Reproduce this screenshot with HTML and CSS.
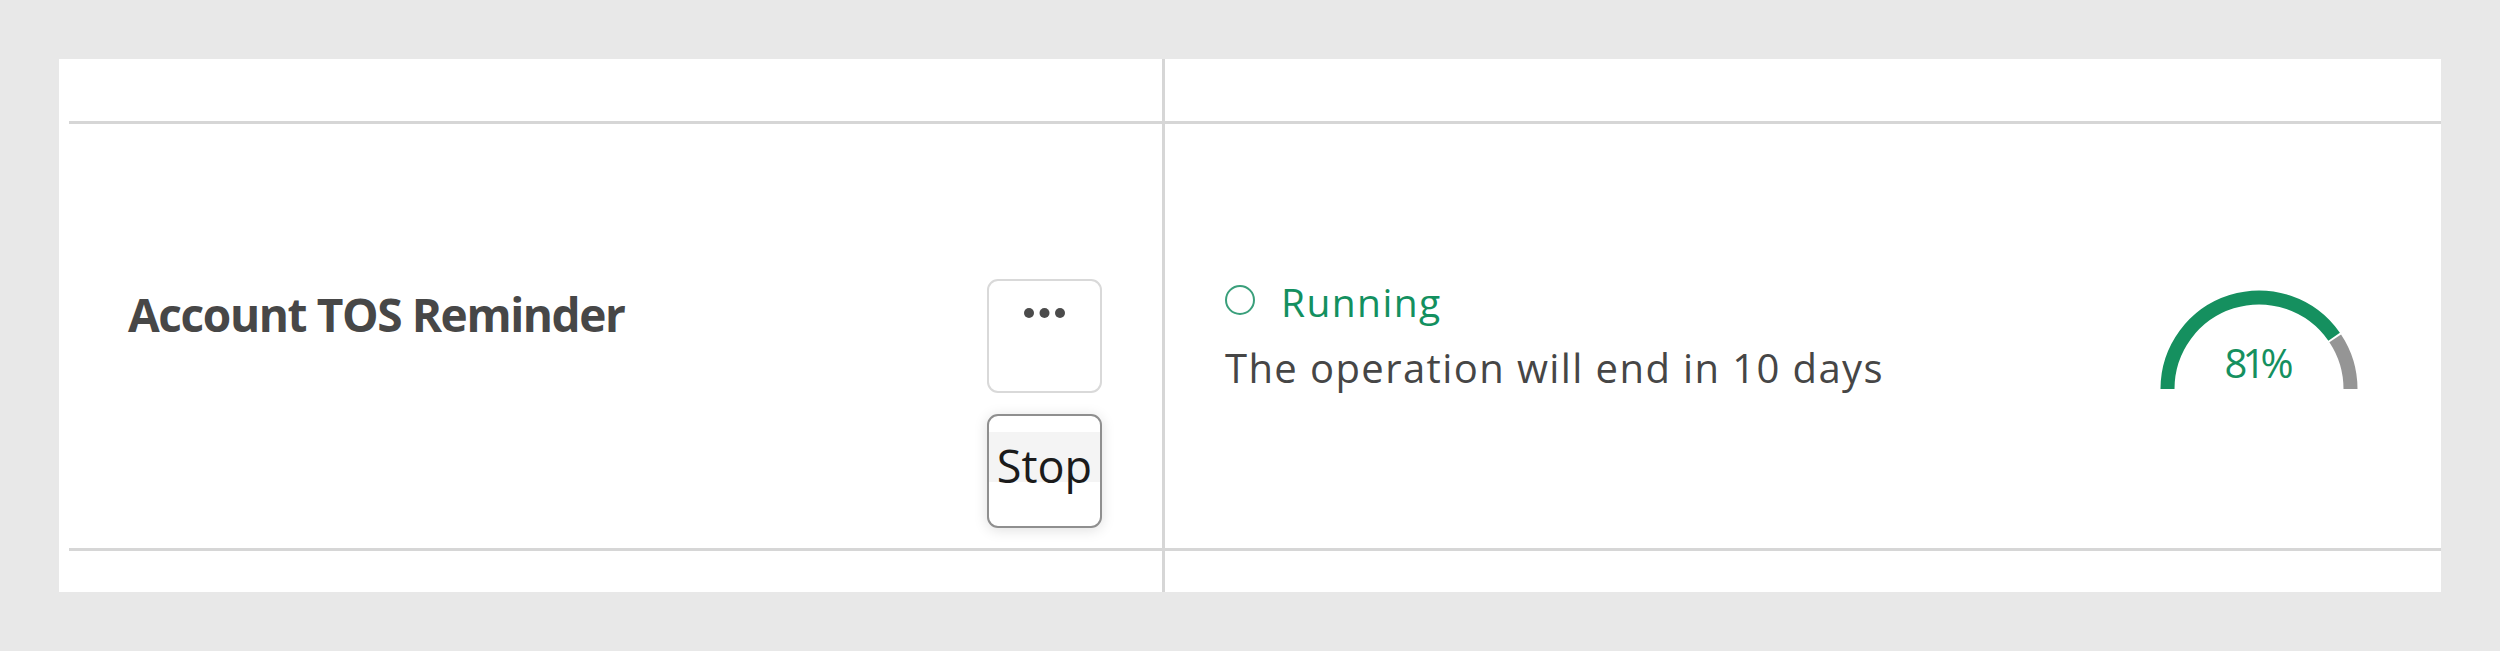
FILE: index.html
```html
<!DOCTYPE html>
<html lang="en">
<head>
<meta charset="utf-8">
<title>Operations</title>
<link rel="stylesheet" href="styles.css">
</head>
<body>
<div class="panel">
  <div class="row head">
    <div class="cell left"></div>
    <div class="cell right"></div>
  </div>
  <div class="row item">
    <div class="cell left item-left">
      <div class="title">Account TOS Reminder</div>
      <div class="actions">
        <button class="btn more" aria-label="More actions">
          <svg class="dots" width="41" height="10" viewBox="0 0 41 10"><circle cx="5" cy="5" r="5"/><circle cx="20.5" cy="5" r="5"/><circle cx="36" cy="5" r="5"/></svg>
        </button>
        <button class="btn stop"><span class="band">Stop</span></button>
      </div>
    </div>
    <div class="cell right item-right">
      <div class="status">
        <div class="state"><span class="ring"></span><span class="state-label">Running</span></div>
        <div class="desc">The operation will end in 10 days</div>
      </div>
      <div class="gauge">
        <svg width="200" height="100" viewBox="0 0 200 100">
          <path class="arc-done" d="M 8.5 100 A 91.5 91.5 0 0 1 175.13 47.78"/>
          <path class="arc-rest" d="M 176.21 49.36 A 91.5 91.5 0 0 1 191.5 100"/>
          <text class="gauge-value" x="100" y="88.8" text-anchor="middle" textLength="69" lengthAdjust="spacing">81%</text>
        </svg>
      </div>
    </div>
  </div>
  <div class="row tail">
    <div class="cell left"></div>
    <div class="cell right"></div>
  </div>
</div>
</body>
</html>
```

FILE: styles.css
```css
html, body {
  margin: 0;
  padding: 0;
}
body {
  background: #e8e8e8;
  font-family: "Open Sans", "Noto Sans", sans-serif;
  color: #4b4b4b;
}
.panel {
  margin: 59px;
  height: 533px;
  background: #ffffff;
  overflow: hidden;
  padding-left: 10px;
  box-sizing: border-box;
}
.row {
  display: grid;
  grid-template-columns: 1096px 1fr;
  border-bottom: 3px solid #d6d6d6;
}
.head {
  height: 62px;
}
.item {
  height: 424px;
}
.tail {
  height: 120px;
}
.cell.left {
  border-right: 3px solid #d6d6d6;
}
.item-left {
  display: flex;
  justify-content: space-between;
  align-items: flex-start;
  padding: 0 60px 0 59px;
}
.title {
  margin-top: 160px;
  font-size: 46px;
  line-height: 60px;
  font-weight: 700;
  letter-spacing: -1.4px;
  color: #474747;
}
.actions {
  margin-top: 155px;
  display: flex;
  flex-direction: column;
  gap: 21px;
}
.btn {
  box-sizing: border-box;
  width: 115px;
  height: 114px;
  border-radius: 11px;
  background: #ffffff;
  margin: 0;
  padding: 0;
  font-family: "Open Sans", "Noto Sans", sans-serif;
}
.more {
  border: 2px solid #d9d9d9;
  padding-top: 27px;
  display: flex;
  justify-content: center;
  align-items: flex-start;
}
.dots {
  display: block;
  fill: #4b4b4b;
}
.stop {
  border: 2px solid #8f8f8f;
  box-shadow: 0 2px 14px rgba(0, 0, 0, 0.13);
  padding-top: 16px;
  display: flex;
  flex-direction: column;
  align-items: stretch;
}
.band {
  display: block;
  height: 50px;
  background: #f4f4f4;
  font-size: 45px;
  line-height: 68px;
  color: #1b1b1b;
  text-align: center;
}
.item-right {
  display: flex;
  justify-content: space-between;
  align-items: flex-start;
  padding: 0 82px 0 60px;
}
.status {
  margin-top: 145px;
}
.state {
  display: flex;
  align-items: center;
  gap: 26px;
  height: 66px;
}
.ring {
  box-sizing: border-box;
  width: 30px;
  height: 30px;
  border: 2px solid #3a9f7b;
  border-radius: 50%;
  margin-bottom: 5px;
}
.state-label {
  font-size: 39px;
  line-height: 66px;
  letter-spacing: 1.4px;
  color: #13905f;
}
.desc {
  font-size: 40px;
  line-height: 66px;
  letter-spacing: 1.4px;
  color: #464646;
}
.gauge {
  margin-top: 165px;
}
.gauge svg {
  display: block;
}
.arc-done {
  fill: none;
  stroke: #15905f;
  stroke-width: 14;
}
.arc-rest {
  fill: none;
  stroke: #959595;
  stroke-width: 14;
}
.gauge-value {
  font-family: "Open Sans", "Noto Sans", sans-serif;
  font-size: 40px;
  fill: #15905f;
}
```
